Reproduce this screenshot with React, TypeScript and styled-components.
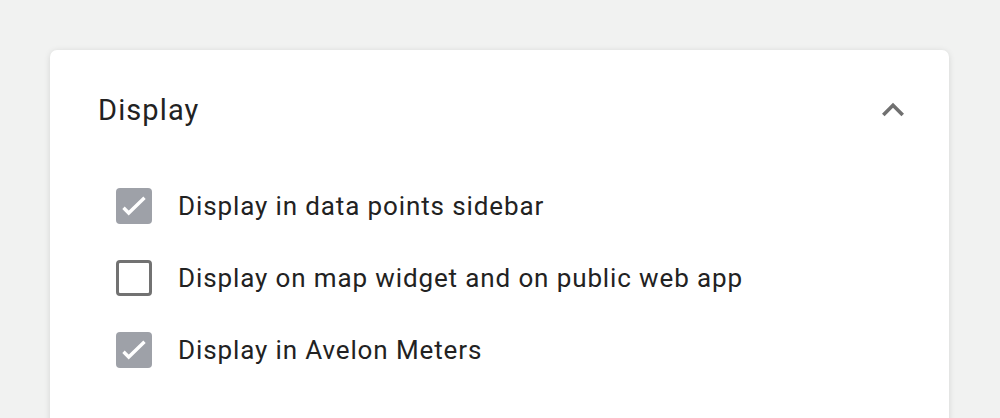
import { FC } from 'react'
import styled, { createGlobalStyle } from 'styled-components'

const GlobalStyle = createGlobalStyle`
   html, body {
      margin: 0;
      padding: 0;
      background: #f1f2f1;
      font-family: Roboto, "Noto Sans", "Liberation Sans", sans-serif;
      color: #222222;
   }
`

interface IOption {
   label: string
   checked: boolean
}

const options: IOption[] = [
   { label: 'Display in data points sidebar', checked: true },
   { label: 'Display on map widget and on public web app', checked: false },
   { label: 'Display in Avelon Meters', checked: true },
]

const CheckBox: FC<{ checked: boolean }> = ({ checked }) => (
   <Box $checked={checked}>
      {checked && (
         <svg width="36" height="36" viewBox="0 0 36 36">
            <path d="M7.5 19.8l5.2 5.2 15.8-15.2" fill="none" stroke="#ffffff" strokeWidth="3.4" />
         </svg>
      )}
   </Box>
)

export default function App() {
   return (
      <>
         <GlobalStyle />
         <Page>
            <Card>
               <Header>
                  <Title>Display</Title>
                  <Toggle aria-label="collapse">
                     <svg width="44" height="44" viewBox="0 0 24 24">
                        <path d="M12 8l-6 6 1.41 1.41L12 10.83l4.59 4.58L18 14z" fill="#707070" />
                     </svg>
                  </Toggle>
               </Header>
               <OptionList>
                  {options.map(option => (
                     <OptionRow key={option.label}>
                        <CheckBox checked={option.checked} />
                        <OptionLabel>{option.label}</OptionLabel>
                     </OptionRow>
                  ))}
               </OptionList>
            </Card>
         </Page>
      </>
   )
}

const Page = styled.div`
   height: 418px;
   overflow: hidden;
   padding: 50px 51px 0 50px;
   box-sizing: border-box;
`

const Card = styled.div`
   background: #ffffff;
   border-radius: 7px;
   box-shadow: 0 1px 6px rgba(0, 0, 0, 0.12);
   padding: 36px 34px 60px 48px;
   min-height: 420px;
   box-sizing: border-box;
`

const Header = styled.div`
   display: flex;
   align-items: center;
   justify-content: space-between;
   height: 48px;
`

const Title = styled.h2`
   margin: 0;
   font-size: 29px;
   font-weight: 400;
   letter-spacing: 1.1px;
   color: #222222;
`

const Toggle = styled.button`
   display: flex;
   align-items: center;
   justify-content: center;
   width: 44px;
   height: 44px;
   padding: 0;
   border: none;
   background: transparent;
   cursor: pointer;
`

const OptionList = styled.div`
   display: flex;
   flex-direction: column;
   gap: 36px;
   margin-top: 54px;
   padding-left: 18px;
`

const OptionRow = styled.label`
   display: flex;
   align-items: center;
   gap: 26px;
   height: 36px;
   cursor: pointer;
`

const Box = styled.span<{ $checked: boolean }>`
   display: flex;
   align-items: center;
   justify-content: center;
   width: 36px;
   height: 36px;
   box-sizing: border-box;
   border-radius: 4px;
   background: ${props => (props.$checked ? '#9ea1a8' : '#ffffff')};
   border: ${props => (props.$checked ? 'none' : '3px solid #727272')};
`

const OptionLabel = styled.span`
   font-size: 26px;
   letter-spacing: 0.88px;
   color: #222222;
`
